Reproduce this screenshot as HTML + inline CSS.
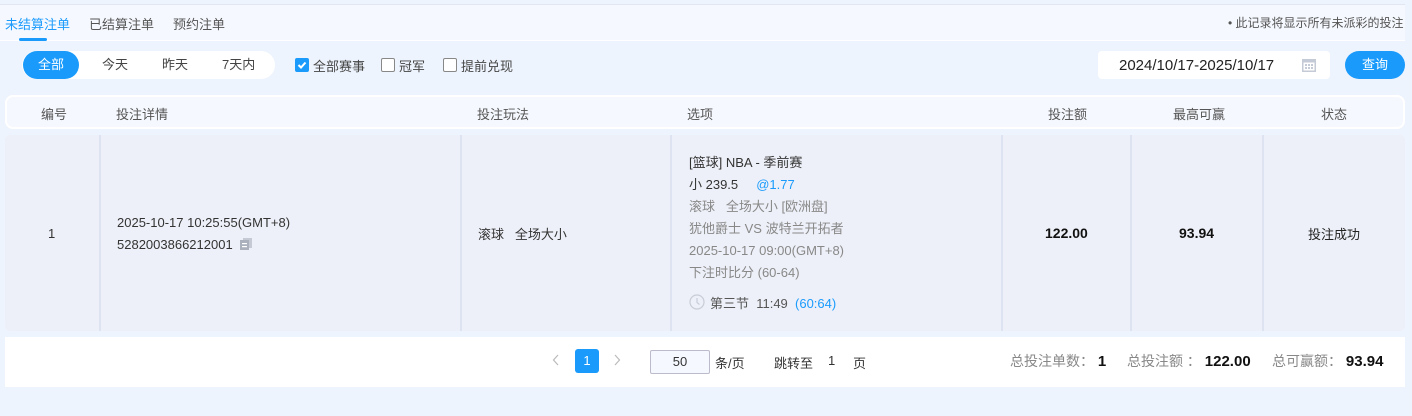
<!DOCTYPE html>
<html><head><meta charset="utf-8"><style>
*{margin:0;padding:0;box-sizing:border-box}
body{width:1412px;height:416px;background:#eef4fd;font-family:"Liberation Sans","Noto Sans CJK SC",sans-serif;font-size:13px;color:#333;position:relative;overflow:hidden}
.abs{position:absolute}
.top{left:0;top:4px;width:1405px;height:37px;background:#f5f8fe;border-top:1px solid #e1e6f0;border-bottom:1px solid #fff}
.tab{top:14px;font-size:13px;color:#555}
.seg{left:22px;top:51px;width:253px;height:28px;background:#fff;border-radius:14px}
.seg .on{position:absolute;left:1px;top:0;width:56px;height:28px;background:#1a9bfc;border-radius:14px;color:#fff;text-align:center;line-height:28px}
.seg span{position:absolute;top:0;line-height:28px;color:#444}
.cb{top:58px;width:14px;height:14px;border:1px solid #888;border-radius:2px;background:#fff}
.lbl{top:56px;color:#444}
.date{left:1098px;top:51px;width:232px;height:28px;background:#fff;border-radius:4px;font-size:15px;line-height:30px;color:#222;padding-left:21px}
.btn{left:1345px;top:51px;width:60px;height:28px;background:#1a9bfc;border-radius:14px;color:#fff;text-align:center;line-height:28px}
.hdr{left:5px;top:95px;width:1400px;height:34px;background:#f5f8fe;border:2px solid #fff;border-radius:8px}
.h{top:104px;color:#555}
.row{left:5px;top:135px;width:1400px;height:196px;background:#edf0f8;border-radius:5px}
.sep{top:135px;width:2px;height:196px;background:#dde3f0}
.foot{left:5px;top:337px;width:1400px;height:50px;background:#fff}
.g{color:#888}
</style></head><body>
<div class="abs top"></div>
<div class="abs tab" style="left:5px;color:#1a9bfc">未结算注单</div>
<div class="abs" style="left:19px;top:38px;width:28px;height:3px;background:#1a9bfc;border-radius:2px"></div>
<div class="abs tab" style="left:89px">已结算注单</div>
<div class="abs tab" style="left:173px">预约注单</div>
<div class="abs" style="left:1228px;top:14px;font-size:12px;color:#555">• 此记录将显示所有未派彩的投注</div>

<div class="abs seg"><div class="on">全部</div><span style="left:80px">今天</span><span style="left:140px">昨天</span><span style="left:200px">7天内</span></div>
<div class="abs cb" style="left:295px;background:#1a9bfc;border-color:#1a9bfc"><svg width="12" height="12" viewBox="0 0 12 12" style="position:absolute;left:0;top:0"><path d="M2.5 6l2.5 2.5 4.5-5" stroke="#fff" stroke-width="2" fill="none"/></svg></div>
<div class="abs lbl" style="left:313px">全部赛事</div>
<div class="abs cb" style="left:381px"></div><div class="abs lbl" style="left:399px">冠军</div>
<div class="abs cb" style="left:443px"></div><div class="abs lbl" style="left:461px">提前兑现</div>
<div class="abs date">2024/10/17-2025/10/17
<svg class="abs" style="left:204px;top:7px" width="14" height="14" viewBox="0 0 14 14"><rect x="0" y="1" width="14" height="13" fill="#c4cad6"/><rect x="1.5" y="4.5" width="11" height="8" fill="#fff"/><g fill="#c4cad6"><rect x="3" y="6" width="2" height="2"/><rect x="6" y="6" width="2" height="2"/><rect x="9" y="6" width="2" height="2"/><rect x="3" y="9" width="2" height="2"/><rect x="6" y="9" width="2" height="2"/><rect x="9" y="9" width="2" height="2"/></g></svg></div>
<div class="abs btn">查询</div>

<div class="abs hdr"></div>
<div class="abs h" style="left:41px">编号</div>
<div class="abs h" style="left:116px">投注详情</div>
<div class="abs h" style="left:477px">投注玩法</div>
<div class="abs h" style="left:687px">选项</div>
<div class="abs h" style="left:1048px">投注额</div>
<div class="abs h" style="left:1173px">最高可赢</div>
<div class="abs h" style="left:1321px">状态</div>

<div class="abs row"></div>
<div class="abs sep" style="left:99px"></div>
<div class="abs sep" style="left:460px"></div>
<div class="abs sep" style="left:670px"></div>
<div class="abs sep" style="left:1001px"></div>
<div class="abs sep" style="left:1130px"></div>
<div class="abs sep" style="left:1262px"></div>
<div class="abs" style="left:48px;top:226px">1</div>
<div class="abs" style="left:117px;top:212px;line-height:22px">2025-10-17 10:25:55(GMT+8)<br>5282003866212001
<svg width="12" height="12" viewBox="0 0 12 12" style="vertical-align:-1px;margin-left:4px"><rect x="3" y="0" width="9" height="10" fill="#c4c9d4"/><rect x="0" y="2" width="9" height="10" fill="#aab0bc"/><rect x="2" y="5" width="5" height="1.2" fill="#fff"/><rect x="2" y="8" width="5" height="1.2" fill="#fff"/></svg></div>
<div class="abs" style="left:478px;top:224px">滚球&nbsp;&nbsp;&nbsp;全场大小</div>
<div class="abs" style="left:689px;top:152px;line-height:22px">
<div>[篮球] NBA - 季前赛</div>
<div>小 239.5&nbsp;&nbsp;&nbsp;&nbsp;&nbsp;<span style="color:#1a9bfc">@1.77</span></div>
<div class="g">滚球&nbsp;&nbsp;&nbsp;全场大小&nbsp;[欧洲盘]</div>
<div class="g">犹他爵士 VS 波特兰开拓者</div>
<div class="g">2025-10-17 09:00(GMT+8)</div>
<div class="g">下注时比分 (60-64)</div>
</div>
<svg class="abs" style="left:689px;top:294px" width="16" height="16" viewBox="0 0 16 16"><circle cx="8" cy="8" r="7" stroke="#c8ccd6" stroke-width="1.2" fill="none"/><path d="M8 4v4.5l2.5 2" stroke="#c8ccd6" stroke-width="1.2" fill="none"/></svg>
<div class="abs" style="left:710px;top:293px;color:#555">第三节&nbsp;&nbsp;11:49&nbsp;&nbsp;<span style="color:#1a9bfc">(60:64)</span></div>
<div class="abs" style="left:1045px;top:225px;font-weight:bold;color:#111;font-size:14px">122.00</div>
<div class="abs" style="left:1179px;top:225px;font-weight:bold;color:#111;font-size:14px">93.94</div>
<div class="abs" style="left:1308px;top:224px;color:#222">投注成功</div>

<div class="abs foot"></div>
<svg class="abs" style="left:552px;top:354px" width="8" height="12" viewBox="0 0 8 12"><path d="M6 1L1.5 6 6 11" stroke="#bbb" stroke-width="1.2" fill="none"/></svg>
<div class="abs" style="left:575px;top:349px;width:24px;height:24px;background:#1a9bfc;border-radius:3px;color:#fff;text-align:center;line-height:24px">1</div>
<svg class="abs" style="left:613px;top:354px" width="8" height="12" viewBox="0 0 8 12"><path d="M2 1l4.5 5L2 11" stroke="#bbb" stroke-width="1.2" fill="none"/></svg>
<div class="abs" style="left:650px;top:350px;width:60px;height:24px;background:#f5f8fe;border:1px solid #bbc;border-radius:2px;text-align:center;line-height:22px">50</div>
<div class="abs" style="left:715px;top:353px">条/页</div>
<div class="abs" style="left:774px;top:353px">跳转至</div>
<div class="abs" style="left:828px;top:353px">1</div>
<div class="abs" style="left:853px;top:353px">页</div>
<div class="abs" style="left:1010px;top:351px;font-size:14px;color:#888">总投注单数： <b style="color:#111;font-size:15px">1</b></div>
<div class="abs" style="left:1127px;top:351px;font-size:14px;color:#888">总投注额 ： <b style="color:#111;font-size:15px">122.00</b></div>
<div class="abs" style="left:1272px;top:351px;font-size:14px;color:#888">总可赢额： <b style="color:#111;font-size:15px">93.94</b></div>
</body></html>
